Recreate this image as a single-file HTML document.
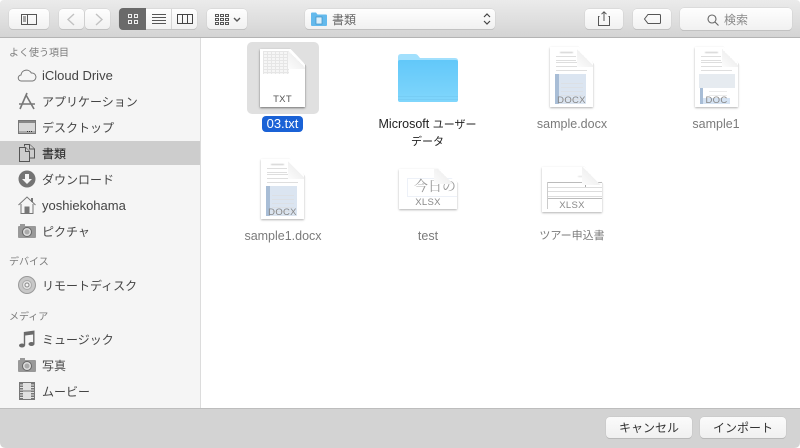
<!DOCTYPE html>
<html lang="ja"><head><meta charset="utf-8"><style>
*{box-sizing:border-box}
html,body{margin:0;padding:0;width:800px;height:448px;overflow:hidden;background:#fff}
body{position:relative;font-family:"Liberation Sans","Noto Sans CJK JP",sans-serif;font-size:12px;color:#333}
.a{position:absolute}
#tb{left:0;top:0;width:800px;height:38px;background:linear-gradient(#ebebeb,#d4d4d4);border-bottom:1px solid #b4b4b4}
.btn{position:absolute;top:9px;height:20px;background:linear-gradient(#fefefe,#f1f1f1);border-radius:4px;box-shadow:0 0 0 .5px #d0d0d0,0 1px 0 #b5b5b5}
svg{position:absolute;overflow:visible}
#sb{left:0;top:38px;width:201px;height:370px;background:#f5f5f5;border-right:1px solid #dcdcdc}
.h{position:absolute;left:9px;font-size:10px;color:#7b7b7b;line-height:14px;white-space:nowrap}
.i{position:absolute;left:42px;font-size:12px;line-height:16px;color:#444;white-space:nowrap}
.lt{font-size:13px}
#sel{left:0;top:141px;width:200px;height:24px;background:#cdcdcd}
#bot{left:0;top:408px;width:800px;height:40px;background:#d3d3d3;border-top:1px solid #bdbdbd}
.b2{position:absolute;top:417px;height:21px;background:linear-gradient(#fbfbfb,#f0f0f0);border-radius:4px;box-shadow:0 0 0 .5px #c4c4c4,0 1px 0 #b0b0b0;text-align:center;font-size:12px;line-height:22px;color:#333}
.lab{position:absolute;text-align:center;font-size:12.5px;line-height:18px;white-space:nowrap;color:#7b7b7b}
.cj{font-size:11px}
.doc{position:absolute;background:#fff;box-shadow:0 1px 2px rgba(0,0,0,.3);clip-path:polygon(-3px -3px,62% -3px,calc(100% + 3px) 32%,calc(100% + 3px) calc(100% + 4px),-3px calc(100% + 4px))}
.fold{position:absolute;right:0;top:0;background:linear-gradient(225deg,transparent 50%,#f1f1f1 50%,#fcfcfc)}
.ext{position:absolute;left:0;right:0;text-align:center;font-size:9.5px;letter-spacing:.3px;color:#888;line-height:12px}
.ln{position:absolute;background:#c4c4c4;height:1px;filter:blur(.4px)}
.tx{position:absolute;background:repeating-linear-gradient(#dedede 0 1px,transparent 1px 4px);filter:blur(.3px)}
.im{position:absolute;filter:blur(.3px)}
</style></head><body>
<div id="tb" class="a"></div>

<div class="btn" style="left:9px;width:40px"></div>
<svg style="left:21px;top:13px" width="16" height="12" fill="none" stroke="#555"><rect x=".5" y="1.5" width="15" height="10"/><path d="M6.500 1.500v10M2 4h3M2 6h3M2 8h3"/></svg>

<div class="btn" style="left:59px;width:25px"></div>
<div class="btn" style="left:85px;width:25px"></div>
<svg style="left:66px;top:13px" width="10" height="13" fill="none" stroke="#c2c2c2" stroke-width="1.4"><path d="M8 1L2 6.500l6 5.500"/></svg>
<svg style="left:94px;top:13px" width="10" height="13" fill="none" stroke="#c2c2c2" stroke-width="1.4"><path d="M2 1l6 5.500L2 12"/></svg>

<div class="btn" style="left:119px;width:78px"></div>
<div class="a" style="left:119px;top:8px;width:27px;height:22px;background:#6a6a6a;border-radius:4px 0 0 4px"></div>
<div class="a" style="left:171px;top:9px;width:1px;height:20px;background:#d5d5d5"></div>
<svg style="left:128px;top:14px" width="10" height="10" fill="none" stroke="#eee"><rect x=".5" y=".5" width="3" height="3"/><rect x="6.500" y=".5" width="3" height="3"/><rect x=".5" y="6.500" width="3" height="3"/><rect x="6.500" y="6.500" width="3" height="3"/></svg>
<svg style="left:152px;top:14px" width="14" height="10" fill="none" stroke="#555"><path d="M0 .5h14M0 3.500h14M0 6.500h14M0 9.500h14"/></svg>
<svg style="left:177px;top:14px" width="16" height="10" fill="none" stroke="#444"><rect x=".5" y=".5" width="15" height="9"/><path d="M5.500 0v10M10.500 0v10"/></svg>

<div class="btn" style="left:207px;width:40px"></div>
<svg style="left:215px;top:14px" width="14" height="11" fill="none" stroke="#555"><path d="M.5.500h3v2h-3zM5.500.500h3v2h-3zM10.500.500h3v2h-3zM.5 4.500h3v2h-3zM5.500 4.500h3v2h-3zM10.500 4.500h3v2h-3zM.5 8.500h3v2h-3zM5.500 8.500h3v2h-3zM10.500 8.500h3v2h-3z"/></svg>
<svg style="left:233px;top:17px" width="8" height="6" fill="none" stroke="#555" stroke-width="1.4"><path d="M1 1l3 3 3-3"/></svg>

<div class="btn" style="left:305px;width:190px"></div>
<svg style="left:311px;top:12px" width="16" height="14"><path d="M0 1.500q0-1 1-1h4l1.500 2H15q1 0 1 1V13q0 1-1 1H1q-1 0-1-1z" fill="#63b9ec"/><rect x="5" y="5" width="6" height="7" fill="#d8eefa" stroke="#3c8fc4" stroke-width=".7"/></svg>
<div class="a" style="left:332px;top:12px;font-size:12px;line-height:16px;color:#666">書類</div>
<svg style="left:483px;top:12px" width="8" height="14" fill="none" stroke="#444" stroke-width="1.2"><path d="M1 5l3-3 3 3M1 9l3 3 3-3"/></svg>

<div class="btn" style="left:585px;width:38px"></div>
<svg style="left:598px;top:11px" width="12" height="15" fill="none" stroke="#555"><path d="M1.500 5.500H.5v9h11v-9h-1M6 10V.8M3.500 3.200L6 .8l2.500 2.400"/></svg>
<div class="btn" style="left:633px;width:38px"></div>
<svg style="left:644px;top:14px" width="17" height="10" fill="none" stroke="#555"><path d="M4 .5h11.500a1 1 0 0 1 1 1v7a1 1 0 0 1-1 1H4L.5 5z"/></svg>
<div class="btn" style="left:680px;top:8px;width:112px;height:22px"></div>
<svg style="left:707px;top:14px" width="12" height="12" fill="none" stroke="#666" stroke-width="1.1"><circle cx="5" cy="5" r="4"/><path d="M8 8l3.500 3.500"/></svg>
<div class="a" style="left:724px;top:12px;font-size:12px;line-height:16px;color:#8a8a8a">検索</div>

<div id="sb" class="a"></div>
<div id="sel" class="a"></div>
<div class="h" style="top:47px">よく使う項目</div>
<div class="i lt" style="top:68px">iCloud Drive</div>
<div class="i" style="top:94px">アプリケーション</div>
<div class="i" style="top:120px">デスクトップ</div>
<div class="i" style="top:146px;font-weight:500;color:#333">書類</div>
<div class="i" style="top:172px">ダウンロード</div>
<div class="i lt" style="top:198px">yoshiekohama</div>
<div class="i" style="top:224px">ピクチャ</div>
<div class="h" style="top:256px">デバイス</div>
<div class="i" style="top:278px">リモートディスク</div>
<div class="h" style="top:311px">メディア</div>
<div class="i" style="top:332px">ミュージック</div>
<div class="i" style="top:358px">写真</div>
<div class="i" style="top:384px">ムービー</div>

<svg style="left:18px;top:68px" width="18" height="14" fill="#f5f5f5" stroke="#777"><path d="M4 13H3.500a3 3 0 0 1-.5-6 5.500 5.500 0 0 1 10.300-2A4 4 0 0 1 14.500 13z"/></svg>
<svg style="left:18px;top:92px" width="18" height="18" fill="none" stroke="#777" stroke-width="1.600"><path d="M9 1L2 17M8 3l8 14M1 12h16"/></svg>
<svg style="left:18px;top:120px" width="18" height="14"><rect x=".5" y=".5" width="17" height="13" fill="#d8d8d8" stroke="#777"/><rect x="1" y="1" width="16" height="2" fill="#888"/><rect x="1" y="11" width="16" height="2" fill="#aaa"/><path d="M9 11.500h1M11 11.500h1M13 11.500h1" stroke="#333"/></svg>
<svg style="left:19px;top:144px" width="16" height="18" fill="#cdcdcd" stroke="#555"><path d="M5.500 2.500V.5h5l5 4.500v9h-5"/><path d="M.5 3.500h6l4 4v10H.5z"/><path d="M6.500 3.500v4h4M10.500.5v4.500h5"/></svg>
<svg style="left:18px;top:170px" width="18" height="18"><circle cx="9" cy="9" r="8.500" fill="#747474"/><path d="M7 4h4v5h3l-5 5-5-5h3z" fill="#f5f5f5"/></svg>
<svg style="left:18px;top:196px" width="18" height="18" fill="none" stroke="#777"><path d="M.5 9L9 1l8.500 8"/><path d="M3 8v9.500h12V8"/><rect x="7" y="11" width="4" height="6.500" fill="#777"/><rect x="13" y="2" width="2" height="4" fill="#777" stroke="none"/></svg>
<svg style="left:18px;top:224px" width="18" height="14"><rect x="0" y="2" width="18" height="12" fill="#999" rx="1"/><rect x="2" y="0" width="5" height="2" fill="#999"/><circle cx="9" cy="8" r="4.500" fill="#ddd" stroke="#666"/><circle cx="9" cy="8" r="2.500" fill="#aaa"/></svg>
<svg style="left:18px;top:276px" width="18" height="18"><circle cx="9" cy="9" r="8.500" fill="#c8c8c8" stroke="#999"/><circle cx="9" cy="9" r="4.500" fill="#e4e4e4" stroke="#aaa"/><circle cx="9" cy="9" r="2" fill="#f5f5f5" stroke="#888"/></svg>
<svg style="left:19px;top:330px" width="16" height="18" fill="#6a6a6a"><ellipse cx="3" cy="15.500" rx="3" ry="2"/><ellipse cx="12.500" cy="14" rx="3" ry="2"/><path d="M4.800 15.500V2L15.500.5v13.500h-1.400V4.500L6.200 5.500v10z"/></svg>
<svg style="left:18px;top:358px" width="18" height="14"><rect x="0" y="2" width="18" height="12" fill="#999" rx="1"/><rect x="2" y="0" width="5" height="2" fill="#999"/><circle cx="9" cy="8" r="4.500" fill="#ddd" stroke="#666"/><circle cx="9" cy="8" r="2.500" fill="#aaa"/></svg>
<svg style="left:19px;top:382px" width="16" height="18"><rect x=".5" y=".5" width="15" height="17" fill="#e2e2e2" stroke="#777"/><path d="M2.500 1v16M13.500 1v16" stroke="#777" stroke-width="3" stroke-dasharray="1.500 1"/><path d="M4 9h8" stroke="#777"/></svg>

<!-- 03.txt -->
<div class="a" style="left:247px;top:42px;width:72px;height:72px;background:#e0e0e0;border-radius:5px"></div>
<div class="doc" style="left:260px;top:49px;width:45px;height:58px;box-shadow:0 1px 2px rgba(0,0,0,.5)">
<div class="im" style="left:3px;top:2px;width:26px;height:23px;background:repeating-linear-gradient(90deg,#e6e6e6 0 1px,transparent 1px 4px),repeating-linear-gradient(#e6e6e6 0 1px,#f6f6f6 1px 3px)"></div>
<div class="fold" style="width:17px;height:20px"></div>
<div class="ext" style="top:45px;letter-spacing:.3px;color:#555">TXT</div></div>
<div class="a" style="left:262px;top:116px;width:41px;height:16px;background:#1a62d6;border-radius:4px;color:#fff;text-align:center;font-size:13px;line-height:16px">03.txt</div>

<!-- folder -->
<svg style="left:398px;top:54px" width="60" height="48"><path d="M0 3q0-3 3-3h14q2 0 3 1.500L22 4H57q3 0 3 3v38q0 3-3 3H3q-3 0-3-3z" fill="#a2e0fd"/><rect x="0" y="6" width="60" height="42" rx="2" fill="url(#f)"/><path d="M0 42.500h60M0 45.500h60" stroke="#6cbfe8" stroke-opacity=".35"/><defs><linearGradient id="f" x1="0" y1="0" x2="0" y2="1"><stop offset="0" stop-color="#62c8f9"/><stop offset="1" stop-color="#80d6fc"/></linearGradient></defs></svg>
<div class="lab" style="left:360px;top:116px;width:135px;color:#222;line-height:16px;white-space:normal">Microsoft <span class="cj">ユーザー</span><br><span class="cj">データ</span></div>

<!-- sample.docx -->
<div class="doc" style="left:550px;top:47px;width:43px;height:60px">
<div class="ln" style="left:10px;top:5px;width:13px"></div><div class="tx" style="left:6px;top:9px;width:20px;height:8px"></div><div class="tx" style="left:6px;top:15px;width:31px;height:11px"></div>
<div class="im" style="left:5px;top:27px;width:31px;height:30px;background:#dbe5f1"></div>
<div class="im" style="left:5px;top:27px;width:4px;height:30px;background:#a8bdd6"></div>
<div class="tx" style="left:11px;top:36px;width:22px;height:20px;opacity:.6"></div>
<div class="fold" style="width:16px;height:20px"></div>
<div class="ext" style="top:48px">DOCX</div></div>
<div class="lab" style="left:517px;top:115px;width:110px">sample.docx</div>

<!-- sample1 -->
<div class="doc" style="left:695px;top:47px;width:43px;height:60px">
<div class="ln" style="left:10px;top:5px;width:13px"></div><div class="tx" style="left:6px;top:9px;width:20px;height:8px"></div><div class="tx" style="left:6px;top:15px;width:31px;height:11px"></div>
<div class="im" style="left:5px;top:51px;width:30px;height:6px;background:#d5e3f3"></div>
<div class="im" style="left:5px;top:27px;width:3px;height:30px;background:#a8bdd6"></div>
<div class="im" style="left:4px;top:27px;width:36px;height:14px;background:#e6ebf0"></div>
<div class="tx" style="left:14px;top:44px;width:18px;height:7px;opacity:.6"></div>
<div class="fold" style="width:16px;height:20px"></div>
<div class="ext" style="top:48px">DOC</div></div>
<div class="lab" style="left:661px;top:115px;width:110px">sample1</div>

<!-- sample1.docx -->
<div class="doc" style="left:261px;top:159px;width:43px;height:60px">
<div class="ln" style="left:10px;top:5px;width:13px"></div><div class="tx" style="left:6px;top:9px;width:20px;height:8px"></div><div class="tx" style="left:6px;top:15px;width:31px;height:11px"></div>
<div class="im" style="left:5px;top:27px;width:31px;height:30px;background:#dbe5f1"></div>
<div class="im" style="left:5px;top:27px;width:4px;height:30px;background:#a8bdd6"></div>
<div class="tx" style="left:11px;top:36px;width:22px;height:20px;opacity:.6"></div>
<div class="fold" style="width:16px;height:20px"></div>
<div class="ext" style="top:48px">DOCX</div></div>
<div class="lab" style="left:228px;top:227px;width:110px">sample1.docx</div>

<!-- test -->
<div class="doc" style="left:399px;top:169px;width:58px;height:40px;clip-path:polygon(-3px -3px,62% -3px,calc(100% + 3px) 38%,calc(100% + 3px) calc(100% + 4px),-3px calc(100% + 4px))">
<div class="a" style="left:8px;top:9px;width:50px;height:19px;border:1px solid #edf1f8;border-right:0"></div>
<div class="a" style="left:15px;top:7px;width:43px;height:20px;overflow:hidden;font-size:14px;line-height:20px;color:#999;white-space:nowrap;font-family:'Noto Serif CJK SC',serif">今日の日</div>
<div class="fold" style="width:23px;height:15px"></div>
<div class="ext" style="top:28px">XLSX</div></div>
<div class="lab" style="left:373px;top:227px;width:110px">test</div>

<!-- ツアー申込書 -->
<div class="doc" style="left:542px;top:167px;width:60px;height:45px;clip-path:polygon(-3px -3px,66% -3px,calc(100% + 3px) 40%,calc(100% + 3px) calc(100% + 4px),-3px calc(100% + 4px))">
<div class="ln" style="left:36px;top:9px;width:10px;background:#ddd"></div>
<div class="ln" style="left:5px;top:15px;width:55px;background:#bbb;filter:none"></div><div class="ln" style="left:5px;top:20px;width:55px;background:#ddd;filter:none"></div><div class="ln" style="left:5px;top:24px;width:55px;background:#ddd;filter:none"></div><div class="ln" style="left:5px;top:29px;width:55px;background:#ddd;filter:none"></div><div class="ln" style="left:5px;top:31px;width:55px;background:#bbb;filter:none"></div>
<div class="a" style="left:5px;top:15px;width:1px;height:27px;background:#ccc"></div>
<div class="a" style="left:43px;top:15px;width:1px;height:5px;background:#aaa"></div>
<div class="fold" style="width:20px;height:18px"></div>
<div class="ext" style="top:33px">XLSX</div></div>
<div class="lab cj" style="left:517px;top:227px;width:110px;font-size:11px">ツアー申込書</div>

<div id="bot" class="a"></div>
<div class="b2" style="left:606px;width:86px">キャンセル</div>
<div class="b2" style="left:700px;width:86px">インポート</div>
<svg style="left:0;top:442px" width="6" height="6"><path d="M0 0v6h6Q0 6 0 0z" fill="#fff"/></svg>
<svg style="left:794px;top:442px" width="6" height="6"><path d="M6 0v6H0Q6 6 6 0z" fill="#fff"/></svg>
<svg style="left:0;top:0" width="4" height="4"><path d="M0 4V0h4Q0 0 0 4z" fill="#fff"/></svg>
<svg style="left:796px;top:0" width="4" height="4"><path d="M4 4V0H0Q4 0 4 4z" fill="#fff"/></svg>
</body></html>
